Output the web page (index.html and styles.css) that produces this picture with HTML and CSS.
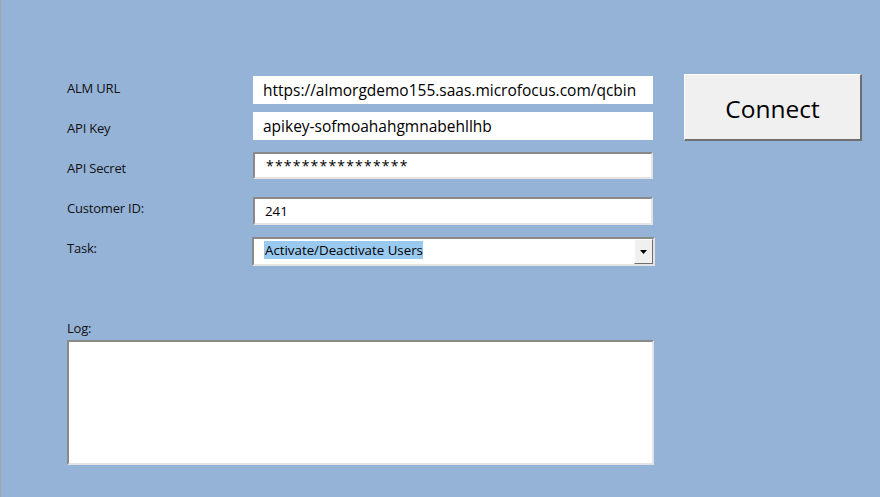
FILE: index.html
```html
<!DOCTYPE html>
<html>
<head>
<meta charset="utf-8">
<link rel="stylesheet" href="styles.css">
</head>
<body>
<div class="sheet">
  <div class="form">
    <div class="labels">
      <span class="label">ALM URL</span>
      <span class="label">API Key</span>
      <span class="label">API Secret</span>
      <span class="label">Customer ID:</span>
      <span class="label">Task:</span>
    </div>
    <div class="fields">
      <div class="box flat big r-url">https://almorgdemo155.saas.microfocus.com/qcbin</div>
      <div class="box flat big r-key">apikey-sofmoahahgmnabehllhb</div>
      <div class="box sunken big stars r-secret">****************</div>
      <div class="box sunken small r-cust">241</div>
      <div class="box sunken small select r-task">
        <span class="sel">Activate/Deactivate Users</span>
        <span class="drop"><svg width="7" height="4" viewBox="0 0 7 4"><path d="M0 0h7L3.5 4z" fill="#000"/></svg></span>
      </div>
    </div>
    <div class="side">
      <button class="connect">Connect</button>
    </div>
  </div>
  <div class="logarea">
    <span class="label">Log:</span>
    <div class="log"></div>
  </div>
</div>
</body>
</html>
```
FILE: styles.css
```css
* { box-sizing: border-box; }
html, body { margin: 0; padding: 0; }
body {
  width: 880px;
  height: 497px;
  background: #95b3d7;
  font-family: "Open Sans", "Noto Sans", "Liberation Sans", sans-serif;
  overflow: hidden;
}
.sheet {
  width: 880px;
  height: 497px;
  border-left: 1px solid #a6a6a6;
  padding: 74px 0 0 66px;
}
.form {
  display: flex;
  align-items: flex-start;
}
.labels {
  width: 186px;
  padding-top: 6px;
  display: flex;
  flex-direction: column;
}
.labels .label {
  height: 40px;
}
.label {
  font-size: 13px;
  line-height: 16px;
  color: #111;
  letter-spacing: -0.2px;
}
.fields {
  width: 404px;
  padding-top: 2px;
  display: flex;
  flex-direction: column;
}
.box {
  width: 400px;
  height: 28px;
  background: #fff;
  display: flex;
  align-items: center;
  padding-left: 10px;
  color: #000;
  white-space: nowrap;
  overflow: hidden;
}
.r-key { margin-top: 8px; }
.r-secret { margin-top: 12px; height: 27px; }
.r-cust { margin-top: 18px; }
.r-task { margin-top: 12px; height: 29px; }
.big { font-size: 15.5px; }
.small { font-size: 13.3px; }
.sunken {
  border-top: 2px solid #8a8a8a;
  border-left: 2px solid #8a8a8a;
  border-right: 2px solid #e3e3e3;
  border-bottom: 2px solid #e3e3e3;
}
.stars { letter-spacing: 1.2px; font-size: 14px; padding-left: 11px; }
.select {
  width: 403px;
  margin-left: -1px;
  padding-right: 0;
  justify-content: space-between;
}
.sel {
  background: #99c9ef;
  padding: 0 0 0 1px;
  line-height: 18px;
  margin-bottom: 3px;
}
.drop {
  width: 19px;
  height: 100%;
  background: #f0f0f0;
  border-left: 1px solid #fff;
  border-top: 1px solid #fff;
  border-right: 1px solid #6e6e6e;
  border-bottom: 1px solid #6e6e6e;
  display: flex;
  align-items: center;
  justify-content: center;
}
.logarea {
  margin-top: 40px;
  display: flex;
  flex-direction: column;
}
.log {
  margin-top: 4px;
  width: 587px;
  height: 125px;
  background: #fff;
  border-top: 2px solid #8a8a8a;
  border-left: 2px solid #8a8a8a;
  border-right: 2px solid #e3e3e3;
  border-bottom: 2px solid #e3e3e3;
}
.side {
  margin-left: 27px;
}
.connect {
  width: 178px;
  height: 67px;
  background: #f0f0f0;
  border-top: 1px solid #fff;
  border-left: 1px solid #fff;
  border-right: 2px solid #6e6e6e;
  border-bottom: 2px solid #6e6e6e;
  font-family: "Open Sans", "Noto Sans", sans-serif;
  font-size: 24.5px;
  color: #000;
  padding: 2px 0 0 0;
  margin: 0;
}
```
